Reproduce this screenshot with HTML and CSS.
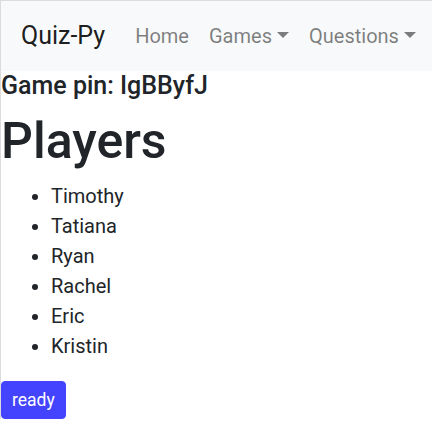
FILE: index.html
```html
<!DOCTYPE html>
<html lang="en">
<head>
<meta charset="utf-8">
<title>Quiz-Py</title>
<link rel="stylesheet" href="styles.css">
</head>
<body>
<nav class="navbar">
  <a class="brand" href="#">Quiz-Py</a>
  <ul class="nav">
    <li><a class="nav-link" href="#">Home</a></li>
    <li><a class="nav-link toggle" href="#">Games</a></li>
    <li><a class="nav-link toggle" href="#">Questions</a></li>
  </ul>
</nav>
<h5 class="pin">Game pin: IgBByfJ</h5>
<h1 class="title">Players</h1>
<ul class="players">
  <li>Timothy</li>
  <li>Tatiana</li>
  <li>Ryan</li>
  <li>Rachel</li>
  <li>Eric</li>
  <li>Kristin</li>
</ul>
<button class="btn">ready</button>
</body>
</html>
```

FILE: styles.css
```css
html { margin: 0; padding: 0; }
body {
  margin: 0;
  border-top: 1px solid #dadce0;
  border-left: 1px solid #dadce0;
  font-family: Roboto, "Liberation Sans", sans-serif;
  font-size: 20px;
  line-height: 1.5;
  color: #212529;
  background: #fff;
}
.navbar {
  display: flex;
  align-items: center;
  background: #f8f9fa;
  padding: 10px 20px;
  height: 70px;
  box-sizing: border-box;
  white-space: nowrap;
}
.brand {
  font-size: 25px;
  line-height: 37.5px;
  padding: 6.25px 0;
  margin-right: 20px;
  color: rgba(0,0,0,.9);
  text-decoration: none;
}
.nav {
  display: flex;
  list-style: none;
  margin: 0;
  padding: 0;
}
.nav-link {
  display: block;
  padding: 10px;
  line-height: 30px;
  color: rgba(0,0,0,.5);
  text-decoration: none;
}
.toggle::after {
  display: inline-block;
  margin-left: .255em;
  vertical-align: .255em;
  content: "";
  border-top: .3em solid;
  border-right: .3em solid transparent;
  border-bottom: 0;
  border-left: .3em solid transparent;
}
.pin {
  margin: 0 0 10px;
  font-size: 25px;
  font-weight: 500;
  line-height: 1.2;
}
.title {
  margin: 0 0 10px;
  font-size: 50px;
  font-weight: 500;
  line-height: 1.2;
}
.players {
  margin: 0 0 20px;
  padding-left: 50px;
}
.btn {
  display: inline-block;
  font-family: inherit;
  font-size: 17.5px;
  line-height: 1.5;
  padding: 5px 10px;
  border: 1px solid #4444ff;
  border-radius: 4px;
  background: #4444ff;
  color: #fff;
  cursor: pointer;
}
```
